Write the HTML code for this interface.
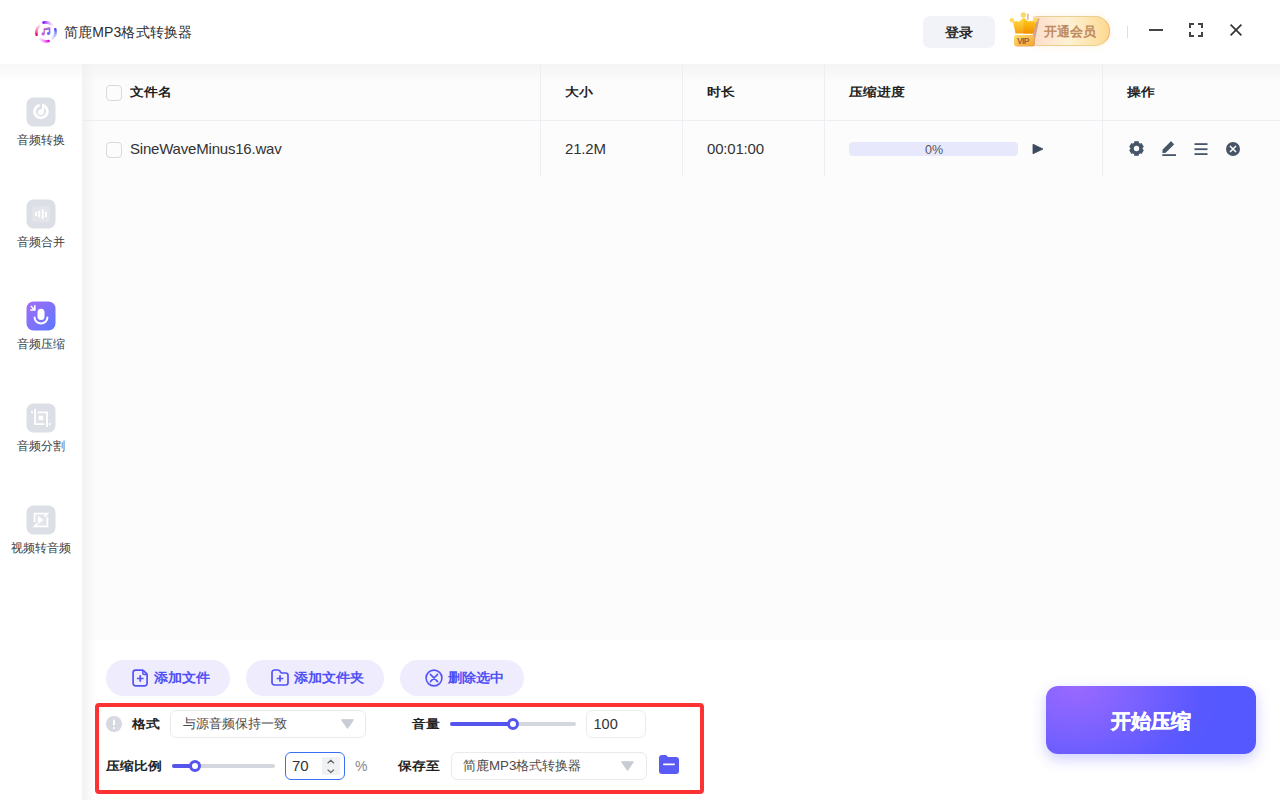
<!DOCTYPE html>
<html><head><meta charset="utf-8">
<style>
*{box-sizing:border-box;margin:0;padding:0}
html,body{width:1280px;height:800px;overflow:hidden;background:#fff;font-family:"Liberation Sans",sans-serif;color:#333}
.a{position:absolute}
.t{position:absolute;white-space:nowrap;line-height:1}
svg{position:absolute;overflow:visible}
#main{position:absolute;left:82px;top:64px;width:1198px;height:576px;background:#fcfcfc}
#shadowTop{position:absolute;left:82px;top:64px;width:1198px;height:18px;background:linear-gradient(#f4f4f4,rgba(252,252,252,0))}
#shadowTopS{position:absolute;left:0;top:64px;width:82px;height:18px;background:linear-gradient(#f7f7f7,rgba(255,255,255,0))}
#shadowLeft{position:absolute;left:82px;top:64px;width:14px;height:736px;background:linear-gradient(90deg,#f2f2f2,rgba(255,255,255,0))}
.sl{position:absolute;left:0;width:82px;text-align:center;font-size:12px;color:#3a3e46;line-height:1;top:0}
.hdr{font-weight:700;font-size:14px;color:#222;transform:scaleY(.87);transform-origin:50% 50%}
.cb{position:absolute;width:16px;height:16px;border:1px solid #d6d9e0;border-radius:4px;background:transparent}
.vl{position:absolute;width:1px;background:#eceef4;top:64px;height:112px}
.pill{position:absolute;top:660px;height:36px;border-radius:18px;background:#eeecfd}
.pt{position:absolute;top:670.3px;font-size:14px;font-weight:700;color:#5050f6;line-height:1;white-space:nowrap;transform:scaleY(.92);transform-origin:50% 50%}
.lbl{font-weight:700;font-size:14px;color:#222;transform:scaleY(.87);transform-origin:50% 50%}
</style></head><body>
<!-- main area -->
<div id="main"></div>
<div id="shadowTop"></div>
<div id="shadowTopS"></div>
<div id="shadowLeft"></div>

<!-- title bar -->
<svg style="left:34px;top:20px" width="24" height="24" viewBox="0 0 24 24">
  <defs>
    <linearGradient id="lgT" x1="0" y1="0" x2="1" y2="0"><stop offset="0" stop-color="#8a00ff"/><stop offset="1" stop-color="#c080ff" stop-opacity=".3"/></linearGradient>
    <linearGradient id="lgR" x1="0" y1="0" x2="0" y2="1"><stop offset="0" stop-color="#4848ff"/><stop offset="1" stop-color="#a0a8ff" stop-opacity=".3"/></linearGradient>
    <linearGradient id="lgB" x1="1" y1="0" x2="0" y2="0"><stop offset="0" stop-color="#e000e8"/><stop offset="1" stop-color="#f080f0" stop-opacity=".3"/></linearGradient>
    <linearGradient id="lgL" x1="0" y1="1" x2="0" y2="0"><stop offset="0" stop-color="#e80060"/><stop offset="1" stop-color="#ff80b0" stop-opacity=".3"/></linearGradient>
    <linearGradient id="lgN" x1="0" y1="0" x2="1" y2="1"><stop offset="0" stop-color="#ff70c0"/><stop offset="1" stop-color="#6060ff"/></linearGradient>
  </defs>
  <path d="M9.5 2.6 A9.6 9.6 0 0 1 17.5 4.5" stroke="url(#lgT)" stroke-width="2.6" fill="none" stroke-linecap="round"/>
  <path d="M21.3 9.2 A9.6 9.6 0 0 1 18.5 18.6" stroke="url(#lgR)" stroke-width="2.6" fill="none" stroke-linecap="round"/>
  <path d="M14.6 21.1 A9.6 9.6 0 0 1 6.5 19.4" stroke="url(#lgB)" stroke-width="2.6" fill="none" stroke-linecap="round"/>
  <path d="M2.6 14.8 A9.6 9.6 0 0 1 5.3 5.7" stroke="url(#lgL)" stroke-width="2.6" fill="none" stroke-linecap="round"/>
  <path d="M10.2 13.8 V8.9 L15.6 8.2 V13.3" stroke="url(#lgN)" stroke-width="1.5" fill="none"/>
  <path d="M10.2 9.2 L15.6 8.5" stroke="url(#lgN)" stroke-width="2"/>
  <circle cx="9.1" cy="13.9" r="1.6" fill="#c060e0"/>
  <circle cx="14.5" cy="13.4" r="1.6" fill="#7070ff"/>
</svg>
<div class="t" style="left:64px;top:25px;font-size:14px;letter-spacing:0.12px;color:#2e2e2e">简鹿MP3格式转换器</div>

<div class="a" style="left:923px;top:16px;width:72px;height:32px;border-radius:7px;background:#f1f3f8"></div>
<div class="t" style="left:945px;top:25px;font-size:14px;font-weight:700;color:#2a2a2a;transform:scaleY(.92);transform-origin:50% 50%">登录</div>

<!-- VIP -->
<div class="a" style="left:1033px;top:16px;width:77px;height:30px;border-radius:0 15px 15px 0;background:linear-gradient(90deg,#fddccc,#fdf1d4 45%,#fdd990);box-shadow:0 0 6px rgba(240,180,100,.22)"></div>
<div class="a" style="left:1036px;top:16px;width:74px;height:30px;border-radius:0 15px 15px 0;border:1.3px solid #f2b478;border-left:none;border-top-color:#e8d090;border-bottom-color:#e8d090"></div>
<div class="t" style="left:1043.5px;top:25px;font-size:13.4px;font-weight:700;color:#c08a60">开通会员</div>
<svg style="left:1006px;top:10px" width="40" height="40" viewBox="0 0 40 40">
  <defs>
    <linearGradient id="cr" x1="0" y1="0" x2="0" y2="1"><stop offset="0" stop-color="#ffe04a"/><stop offset="1" stop-color="#f7a010"/></linearGradient>
    <linearGradient id="cr2" x1="0" y1="0" x2="0" y2="1"><stop offset="0" stop-color="#ffd020"/><stop offset="1" stop-color="#f39000"/></linearGradient>
    <linearGradient id="vp" x1="0" y1="0" x2="1" y2="1"><stop offset="0" stop-color="#ffe070"/><stop offset="1" stop-color="#f3a030"/></linearGradient>
  </defs>
  <path d="M30 8.5 L33.5 8.5 L29.5 27 L28 36 L26 36 L27 26 Z" fill="#c89a78" opacity=".85"/>
  <path d="M21.2 3.5 L22.8 4 L22.5 10 L21 9.5 Z" fill="#c89a78" opacity=".7"/>
  <path d="M9.5 11 L7 12 L9.5 23.5 L27.5 23.5 L29.5 11.5 L27 11.2 L22 11.5 L17.5 7.8 L13 11.5 Z" fill="url(#cr)"/>
  <path d="M17.5 7.8 L22 11.5 L27 11.2 L29.5 11.5 L27.5 23.5 L17.5 23.5 Z" fill="url(#cr2)"/>
  <circle cx="5.8" cy="10.3" r="2.3" fill="#ffd860"/>
  <circle cx="17.5" cy="5" r="2.7" fill="#ffd860"/>
  <circle cx="29.4" cy="10" r="2.3" fill="#ffd860"/>
  <rect x="9" y="25.5" width="20" height="11" rx="2.2" fill="#d9a274"/>
  <rect x="8" y="25" width="20.3" height="11" rx="2.2" fill="url(#vp)"/>
  <text x="11" y="33.6" font-family="Liberation Sans" font-size="8.6" font-weight="700" fill="#9a6432" textLength="12.5">VIP</text>
</svg>

<div class="a" style="left:1127px;top:26px;width:1px;height:12px;background:#dedede"></div>
<div class="a" style="left:1149px;top:29px;width:14px;height:2px;background:#444"></div>
<svg style="left:1189px;top:23px" width="14" height="14" viewBox="0 0 14 14">
  <path d="M1 5 V1 H5 M9 1 H13 V5 M13 9 V13 H9 M5 13 H1 V9" stroke="#444" stroke-width="2" fill="none"/>
</svg>
<svg style="left:1230px;top:24px" width="12" height="12" viewBox="0 0 12 12">
  <path d="M0.6 0.6 L11.4 11.4 M11.4 0.6 L0.6 11.4" stroke="#333" stroke-width="1.6" fill="none"/>
</svg>

<!-- sidebar icons -->
<svg style="left:27px;top:98px" width="28" height="28" viewBox="0 0 28 28">
  <rect x="-0.5" y="-0.5" width="29" height="29" rx="7" fill="#dcdfe6"/>
  <path d="M12.6 7.2 A6.4 6.4 0 1 0 16 7.4" stroke="#fff" stroke-width="2.7" fill="none"/>
  <path d="M16 5.8 V14" stroke="#fff" stroke-width="2"/>
  <circle cx="13.9" cy="14.1" r="2.9" fill="#fff"/>
</svg>
<div class="sl" style="top:134px">音频转换</div>

<svg style="left:27px;top:200px" width="28" height="28" viewBox="0 0 28 28">
  <rect x="-0.5" y="-0.5" width="29" height="29" rx="7" fill="#dcdfe6"/>
  <rect x="5" y="6" width="18" height="16" rx="3" fill="#e3e5ea"/>
  <rect x="8" y="12" width="2" height="4" fill="#fff"/>
  <rect x="11.2" y="10.8" width="2" height="6.4" fill="#fff"/>
  <rect x="14.8" y="9.2" width="1.8" height="9.8" fill="#fff"/>
  <rect x="18" y="11.8" width="2" height="5.2" fill="#fff"/>
</svg>
<div class="sl" style="top:236px">音频合并</div>

<svg style="left:27px;top:302px" width="28" height="28" viewBox="0 0 28 28">
  <defs><linearGradient id="ac" x1="0" y1="0" x2="1" y2="1"><stop offset="0" stop-color="#a46cf6"/><stop offset="1" stop-color="#5a78ff"/></linearGradient></defs>
  <rect x="-0.5" y="-0.5" width="29" height="29" rx="7" fill="url(#ac)"/>
  <rect x="10.5" y="6.8" width="7" height="11.2" rx="3.5" fill="#fff"/>
  <path d="M7.6 15.6 A6.4 6 0 0 0 20.4 15.6" stroke="#fff" stroke-width="2" fill="none" stroke-linecap="round"/>
  <path d="M3.8 4 L7.6 7.8 M3.2 8 H7.8 V3.2" stroke="#fff" stroke-width="1.6" fill="none"/>
</svg>
<div class="sl" style="top:338px">音频压缩</div>

<svg style="left:27px;top:404px" width="28" height="28" viewBox="0 0 28 28">
  <rect x="-0.5" y="-0.5" width="29" height="29" rx="7" fill="#dcdfe6"/>
  <rect x="10.5" y="10.5" width="7" height="7" fill="#e3e5ea"/>
  <rect x="11.8" y="11.8" width="4.2" height="4.2" fill="#fff"/>
  <path d="M8.1 5 V20.1 H17.5 M10.5 8.4 H20 V23" stroke="#fff" stroke-width="1.8" fill="none"/>
  <rect x="4" y="7.3" width="2" height="1.8" fill="#fff"/>
  <rect x="21.8" y="19.2" width="2" height="1.8" fill="#fff"/>
</svg>
<div class="sl" style="top:440px">音频分割</div>

<svg style="left:27px;top:506px" width="28" height="28" viewBox="0 0 28 28">
  <rect x="-0.5" y="-0.5" width="29" height="29" rx="7" fill="#dcdfe6"/>
  <rect x="9" y="9" width="10" height="10" fill="#e3e5ea"/>
  <path d="M7.6 16.2 V7.6 H20.4 L17.6 10.4 M20.4 10.4 V20.4 H7.6 L10.4 17.6" stroke="#fff" stroke-width="1.8" fill="none"/>
  <path d="M11 10 L16.5 14 L11 18 Z" fill="#fff"/>
</svg>
<div class="sl" style="top:542px">视频转音频</div>

<!-- table -->
<div class="a" style="left:82px;top:120px;width:1198px;height:1px;background:#eceef4"></div>
<div class="vl" style="left:540px"></div>
<div class="vl" style="left:682px"></div>
<div class="vl" style="left:824px"></div>
<div class="vl" style="left:1102px"></div>
<div class="cb" style="left:106px;top:85px"></div>
<div class="t hdr" style="left:130px;top:85px">文件名</div>
<div class="t hdr" style="left:565px;top:85px">大小</div>
<div class="t hdr" style="left:707px;top:85px">时长</div>
<div class="t hdr" style="left:849px;top:85px">压缩进度</div>
<div class="t hdr" style="left:1127px;top:85px">操作</div>

<div class="cb" style="left:106px;top:142px"></div>
<div class="t" style="left:130px;top:141px;font-size:15px;letter-spacing:-0.2px;color:#333">SineWaveMinus16.wav</div>
<div class="t" style="left:565px;top:141px;font-size:15px;letter-spacing:-0.2px;color:#333">21.2M</div>
<div class="t" style="left:707px;top:141px;font-size:15px;letter-spacing:-0.2px;color:#333">00:01:00</div>
<div class="a" style="left:849px;top:142px;width:169px;height:14px;border-radius:4px;background:#e8e8fd"></div>
<div class="t" style="left:925px;top:144px;font-size:12.5px;color:#555">0%</div>
<svg style="left:1032px;top:143px" width="12" height="12" viewBox="0 0 12 12">
  <path d="M1 1.2 L11 6 L1 10.8 Z" fill="#3c4a5e" stroke="#3c4a5e" stroke-width="0.8" stroke-linejoin="round"/>
</svg>
<!-- op icons -->
<svg style="left:1129px;top:141px" width="15" height="15" viewBox="0 0 16 16">
  <path fill="#475569" stroke="#475569" stroke-width="1.2" stroke-linejoin="round" fill-rule="evenodd" d="M5.95 2.36 L6.11 0.93 L9.89 0.93 L10.05 2.36 L11.86 3.40 L13.21 2.88 L15.10 6.15 L13.91 6.96 L13.91 9.04 L15.10 9.85 L13.21 13.12 L11.86 12.60 L10.05 13.64 L9.89 15.07 L6.11 15.07 L5.95 13.64 L4.14 12.60 L2.79 13.12 L0.90 9.85 L2.09 9.04 L2.09 6.96 L0.90 6.15 L2.79 2.88 L4.14 3.40 Z"/>
  <circle cx="8" cy="8" r="2.9" fill="#fcfcfc"/>
</svg>
<svg style="left:1161px;top:140px" width="16" height="17" viewBox="0 0 16 17">
  <path d="M2.1 9.8 L10.0 1.9 L12.4 4.3 L4.5 12.2 L2.0 12.4 Z" fill="#475569" stroke="#475569" stroke-width="1.1" stroke-linejoin="round"/>
  <rect x="1.3" y="14.2" width="13.7" height="1.8" fill="#475569"/>
</svg>
<svg style="left:1194px;top:142px" width="14" height="14" viewBox="0 0 14 14">
  <rect x="0.5" y="1.2" width="13" height="1.8" fill="#475569"/>
  <rect x="0.5" y="6.3" width="13" height="1.8" fill="#475569"/>
  <rect x="0.5" y="11.2" width="13" height="1.8" fill="#475569"/>
</svg>
<svg style="left:1226px;top:142px" width="14" height="14" viewBox="0 0 14 14">
  <circle cx="7" cy="7" r="7" fill="#475569"/>
  <path d="M4 4 L10 10 M10 4 L4 10" stroke="#fff" stroke-width="1.5"/>
</svg>

<!-- bottom buttons -->
<div class="pill" style="left:106px;width:124px"></div>
<svg style="left:132px;top:669px" width="17" height="18" viewBox="0 0 17 18">
  <path d="M3.6 1.1 H10.4 Q11 1.1 11.5 1.6 L14.6 4.7 Q15.1 5.2 15.1 5.8 V14.3 A2.5 2.5 0 0 1 12.6 16.8 H3.6 A2.5 2.5 0 0 1 1.1 14.3 V3.6 A2.5 2.5 0 0 1 3.6 1.1 Z" stroke="#5454f6" stroke-width="1.7" fill="none" stroke-linejoin="round"/>
  <path d="M10.8 1.4 V3.9 A1.5 1.5 0 0 0 12.3 5.4 H14.8" stroke="#5454f6" stroke-width="1.5" fill="none"/>
  <path d="M8.2 6.2 V12.8 M4.9 9.5 H11.5" stroke="#5454f6" stroke-width="1.7"/>
</svg>
<div class="pt" style="left:154px">添加文件</div>

<div class="pill" style="left:246px;width:138px"></div>
<svg style="left:271px;top:669px" width="18" height="17" viewBox="0 0 18 17">
  <path d="M1 3.5 A2.5 2.5 0 0 1 3.5 1 H7 Q8.4 1 9 2.2 L9.3 2.8 Q9.9 4 11.2 4 H14.8 A2.2 2.2 0 0 1 17 6.2 V13.8 A2.2 2.2 0 0 1 14.8 16 H3.5 A2.5 2.5 0 0 1 1 13.5 Z" stroke="#5454f6" stroke-width="1.7" fill="none" stroke-linejoin="round"/>
  <path d="M9 6.3 V12.7 M5.7 9.5 H12.3" stroke="#5454f6" stroke-width="1.7"/>
</svg>
<div class="pt" style="left:294px">添加文件夹</div>

<div class="pill" style="left:400px;width:124px"></div>
<svg style="left:425px;top:669px" width="18" height="18" viewBox="0 0 18 18">
  <circle cx="9" cy="9" r="7.9" stroke="#5454f6" stroke-width="1.6" fill="none"/>
  <path d="M5.4 5.4 L12.6 12.6 M12.6 5.4 L5.4 12.6" stroke="#5454f6" stroke-width="1.6" stroke-linecap="round"/>
</svg>
<div class="pt" style="left:448px">删除选中</div>

<!-- settings panel -->
<div class="a" style="left:95px;top:703px;width:609px;height:91px;border:4px solid #fd3333;border-radius:4px"></div>
<svg style="left:106px;top:716px" width="16" height="16" viewBox="0 0 16 16">
  <circle cx="8" cy="8" r="8" fill="#d6d9e0"/>
  <rect x="7" y="3.5" width="2" height="6" rx="1" fill="#fff"/>
  <circle cx="8" cy="12" r="1.1" fill="#fff"/>
</svg>
<div class="t lbl" style="left:132px;top:717px">格式</div>
<div class="a" style="left:170px;top:710px;width:196px;height:28px;border:1px solid #e9eaf0;border-radius:6px;background:#fff"></div>
<div class="t" style="left:183px;top:717px;font-size:13px;color:#4a4a4a">与源音频保持一致</div>
<svg style="left:340.5px;top:719px" width="13" height="10" viewBox="0 0 13 10">
  <path d="M0.8 0.8 H12.2 L6.5 9.2 Z" fill="#c8ccd4" stroke="#c8ccd4" stroke-width="1.2" stroke-linejoin="round"/>
</svg>

<div class="t lbl" style="left:412px;top:717px">音量</div>
<div class="a" style="left:450px;top:722px;width:126px;height:4px;border-radius:2px;background:#d4d7de"></div>
<div class="a" style="left:450px;top:722px;width:63px;height:4px;border-radius:2px;background:#5555ee"></div>
<div class="a" style="left:507px;top:718px;width:12px;height:12px;border-radius:50%;border:3px solid #5555ee;background:#fff"></div>
<div class="a" style="left:586px;top:710px;width:60px;height:28px;border:1px solid #ebebf0;border-radius:6px;background:#fff"></div>
<div class="t" style="left:593.5px;top:716.5px;font-size:14.5px;color:#333">100</div>

<div class="t lbl" style="left:106px;top:759px">压缩比例</div>
<div class="a" style="left:172px;top:764px;width:103px;height:4px;border-radius:2px;background:#d4d7de"></div>
<div class="a" style="left:172px;top:764px;width:24px;height:4px;border-radius:2px;background:#5555ee"></div>
<div class="a" style="left:189px;top:760px;width:12px;height:12px;border-radius:50%;border:3px solid #5555ee;background:#fff"></div>
<div class="a" style="left:285px;top:752px;width:60px;height:28px;border:1.6px solid #3a6ff4;border-radius:6px;background:#fff"></div>
<div class="t" style="left:292px;top:757.5px;font-size:15px;color:#333">70</div>
<div class="a" style="left:322px;top:757px;width:18px;height:18px;background:#f0f1f3;border-radius:1px"></div>
<svg style="left:322px;top:757px" width="17" height="17" viewBox="0 0 17 17">
  <path d="M5.6 6.2 L8.8 3.4 L12 6.2 M5.6 12.6 L8.8 15.4 L12 12.6" stroke="#5a606a" stroke-width="1.2" fill="none"/>
</svg>
<div class="t" style="left:355px;top:759px;font-size:14px;color:#888">%</div>

<div class="t lbl" style="left:398px;top:759px">保存至</div>
<div class="a" style="left:451px;top:752px;width:196px;height:28px;border:1px solid #e9eaf0;border-radius:6px;background:#fff"></div>
<div class="t" style="left:463px;top:758.7px;font-size:13.3px;color:#4a4a4a">简鹿MP3格式转换器</div>
<svg style="left:621px;top:761px" width="13" height="10" viewBox="0 0 13 10">
  <path d="M0.8 0.8 H12.2 L6.5 9.2 Z" fill="#c8ccd4" stroke="#c8ccd4" stroke-width="1.2" stroke-linejoin="round"/>
</svg>
<svg style="left:659px;top:755px" width="20" height="19" viewBox="0 0 20 19">
  <path d="M0 3 A3 3 0 0 1 3 0 H7 L9 2 H17 A3 3 0 0 1 20 5 V16 A3 3 0 0 1 17 19 H3 A3 3 0 0 1 0 16 Z" fill="#5a5af5"/>
  <rect x="4" y="8.4" width="12" height="1.8" rx=".9" fill="#fff"/>
</svg>

<!-- start button -->
<div class="a" style="left:1046px;top:686px;width:210px;height:68px;border-radius:12px;background:radial-gradient(ellipse 150px 115px at 30px 0px,#9a69ff 0%,#7c62ff 40%,#5a58ff 82%,#5558ff 100%);box-shadow:0 5px 14px rgba(90,90,255,.3)"></div>
<div class="t" style="left:1111px;top:711px;font-size:20px;font-weight:700;color:#fff;-webkit-text-stroke:0.4px #fff">开始压缩</div>
</body></html>
